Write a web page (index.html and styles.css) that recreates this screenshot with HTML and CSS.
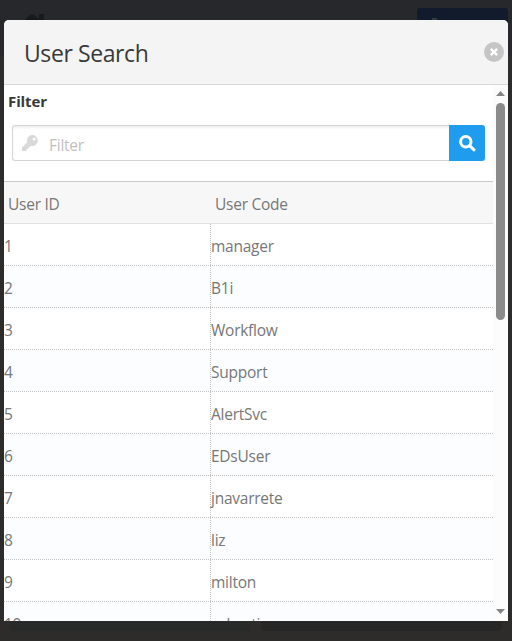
FILE: index.html
```
<!DOCTYPE html>
<html lang="en">
<head>
<meta charset="utf-8">
<title>User Search</title>
<link rel="stylesheet" href="styles.css">
</head>
<body>
<div class="backdrop">
  <svg class="home" viewBox="0 0 24 22"><path d="M0 9 7.5 1.5h3L16 6V1h5v9l3 3v9H0z"/></svg>
  <div class="dim-button"><i></i></div>
  <div class="dim-field left"></div>
  <div class="dim-field right"></div>
</div>
<section class="modal">
  <header class="modal-header">
    <h1>User Search</h1>
    <svg class="close" viewBox="0 0 20 20"><circle cx="10" cy="10" r="10" fill="#c5c5c5"/><path d="M6.8 6.8l6.4 6.4M13.2 6.8l-6.4 6.4" stroke="#fff" stroke-width="2.5"/></svg>
  </header>
  <div class="modal-body">
    <div class="content">
      <div class="label">Filter</div>
      <div class="search">
        <div class="field">
          <svg class="key" viewBox="0 0 16 16"><path fill-rule="evenodd" d="M10.5 0A5.5 5.5 0 0 0 5.3 7.3L0 12.6V16h4.5v-2h2v-2h1.7l1.1-1.1A5.5 5.5 0 1 0 10.5 0zm1.6 2.4a1.5 1.5 0 1 1 0 3 1.5 1.5 0 0 1 0-3z"/></svg>
          <span>Filter</span>
        </div>
        <div class="go"><svg viewBox="0 0 17 17"><circle cx="6.8" cy="6.8" r="5.2"/><path d="M10.8 10.8l4.2 4"/></svg></div>
      </div>
      <div class="table">
        <div class="row head"><span>User ID</span><span>User Code</span></div>
        <div class="row"><span>1</span><span>manager</span></div>
        <div class="row"><span>2</span><span>B1i</span></div>
        <div class="row"><span>3</span><span>Workflow</span></div>
        <div class="row"><span>4</span><span>Support</span></div>
        <div class="row"><span>5</span><span>AlertSvc</span></div>
        <div class="row"><span>6</span><span>EDsUser</span></div>
        <div class="row"><span>7</span><span>jnavarrete</span></div>
        <div class="row"><span>8</span><span>liz</span></div>
        <div class="row"><span>9</span><span>milton</span></div>
        <div class="row"><span>10</span><span>sebastian</span></div>
      </div>
    </div>
    <div class="scrollbar">
      <svg viewBox="0 0 9 5"><path d="M0 5 4.5 0 9 5z"/></svg>
      <div class="thumb"></div>
      <svg class="down" viewBox="0 0 9 5"><path d="M0 0 4.5 5 9 0z"/></svg>
    </div>
  </div>
</section>
</body>
</html>
```
FILE: styles.css
```
* { box-sizing: border-box; }
body {
  margin: 0;
  height: 641px;
  padding: 20px 4px;
  overflow: hidden;
  background: linear-gradient(#27282c 0 56px, #2d2c2b 56px 100%);
  font: 15.5px/20px "Open Sans", "Noto Sans", sans-serif;
  letter-spacing: -0.25px;
  color: #777;
}
.backdrop { position: absolute; inset: 0; overflow: hidden; }
.home { position: absolute; left: 23px; top: 13px; width: 24px; height: 22px; fill: #18191b; }
.dim-button { position: absolute; left: 417px; top: 8px; width: 91px; height: 36px; border-radius: 3px; background: #111b2b; }
.dim-button i { position: absolute; left: 15px; top: 10px; width: 5px; height: 3px; background: #34393f; }
.dim-field { position: absolute; top: 600px; height: 31px; border-radius: 4px; }
.left { left: 10px; width: 241px; background: #282a29; }
.right { left: 261px; width: 241px; background: #262626; }
.modal {
  position: relative;
  width: 504px;
  height: 601px;
  border-radius: 5px 5px 0 0;
  overflow: hidden;
  background: #fff;
}
.modal-header {
  display: flex;
  align-items: center;
  justify-content: space-between;
  height: 65px;
  padding: 0 4px 0 20px;
  background: #f4f4f4;
  border-bottom: 1px solid #d8d8d8;
}
h1 { margin: 2px 0 0; font-size: 23px; line-height: 32px; font-weight: 400; letter-spacing: -0.4px; color: #393939; }
.close { width: 20px; height: 20px; }
.modal-body { display: flex; height: 536px; overflow: hidden; }
.content { width: 489px; }
.label { height: 40px; padding: 6px 4px 0; font-size: 15px; font-weight: 700; letter-spacing: -0.1px; color: #393939; }
.search { display: flex; height: 36px; margin: 0 8px 20px; }
.field {
  flex: 1;
  display: flex;
  align-items: center;
  gap: 11px;
  padding: 2px 0 0 9px;
  border: 1px solid #d5d5d5;
  border-right: 0;
  border-radius: 3px 0 0 3px;
  box-shadow: inset 0 2px 2px #f0f0f0;
  color: #bfbfbf;
}
.field span { padding-top: 2px; }
.key { width: 16px; height: 16px; margin-top: -3px; fill: #d9d9d9; }
.go { display: flex; align-items: center; justify-content: center; width: 36px; background: #209cee; border-radius: 0 3px 3px 0; }
.go svg { width: 17px; height: 17px; fill: none; stroke: #fff; stroke-width: 3; stroke-linecap: round; }
.row { display: flex; height: 42px; line-height: 45px; border-bottom: 1px dotted #c4c4c4; }
.row span { height: 41px; }
.row span:first-child { width: 206px; }
.row span:last-child { flex: 1; }
.row:not(.head) span:last-child { border-left: 1px dotted #c4c4c4; }
.row:nth-child(odd) { background: #fbfdff; }
.row.head { height: 43px; background: #f7f7f7; border-top: 1px solid #c8c8c8; border-bottom: 1px solid #e1e1e1; }
.head span { padding-left: 4px; }
.head span:last-child { padding-left: 5px; }
.scrollbar { display: flex; flex-direction: column; align-items: center; width: 15px; padding: 6px 0 7px; background: #fcfcfc; }
.scrollbar svg { width: 9px; height: 5px; fill: #858585; }
.thumb { width: 9px; height: 217px; margin-top: 7px; border-radius: 5px; background: #8b8b8b; }
.scrollbar .down { margin-top: auto; }
```
